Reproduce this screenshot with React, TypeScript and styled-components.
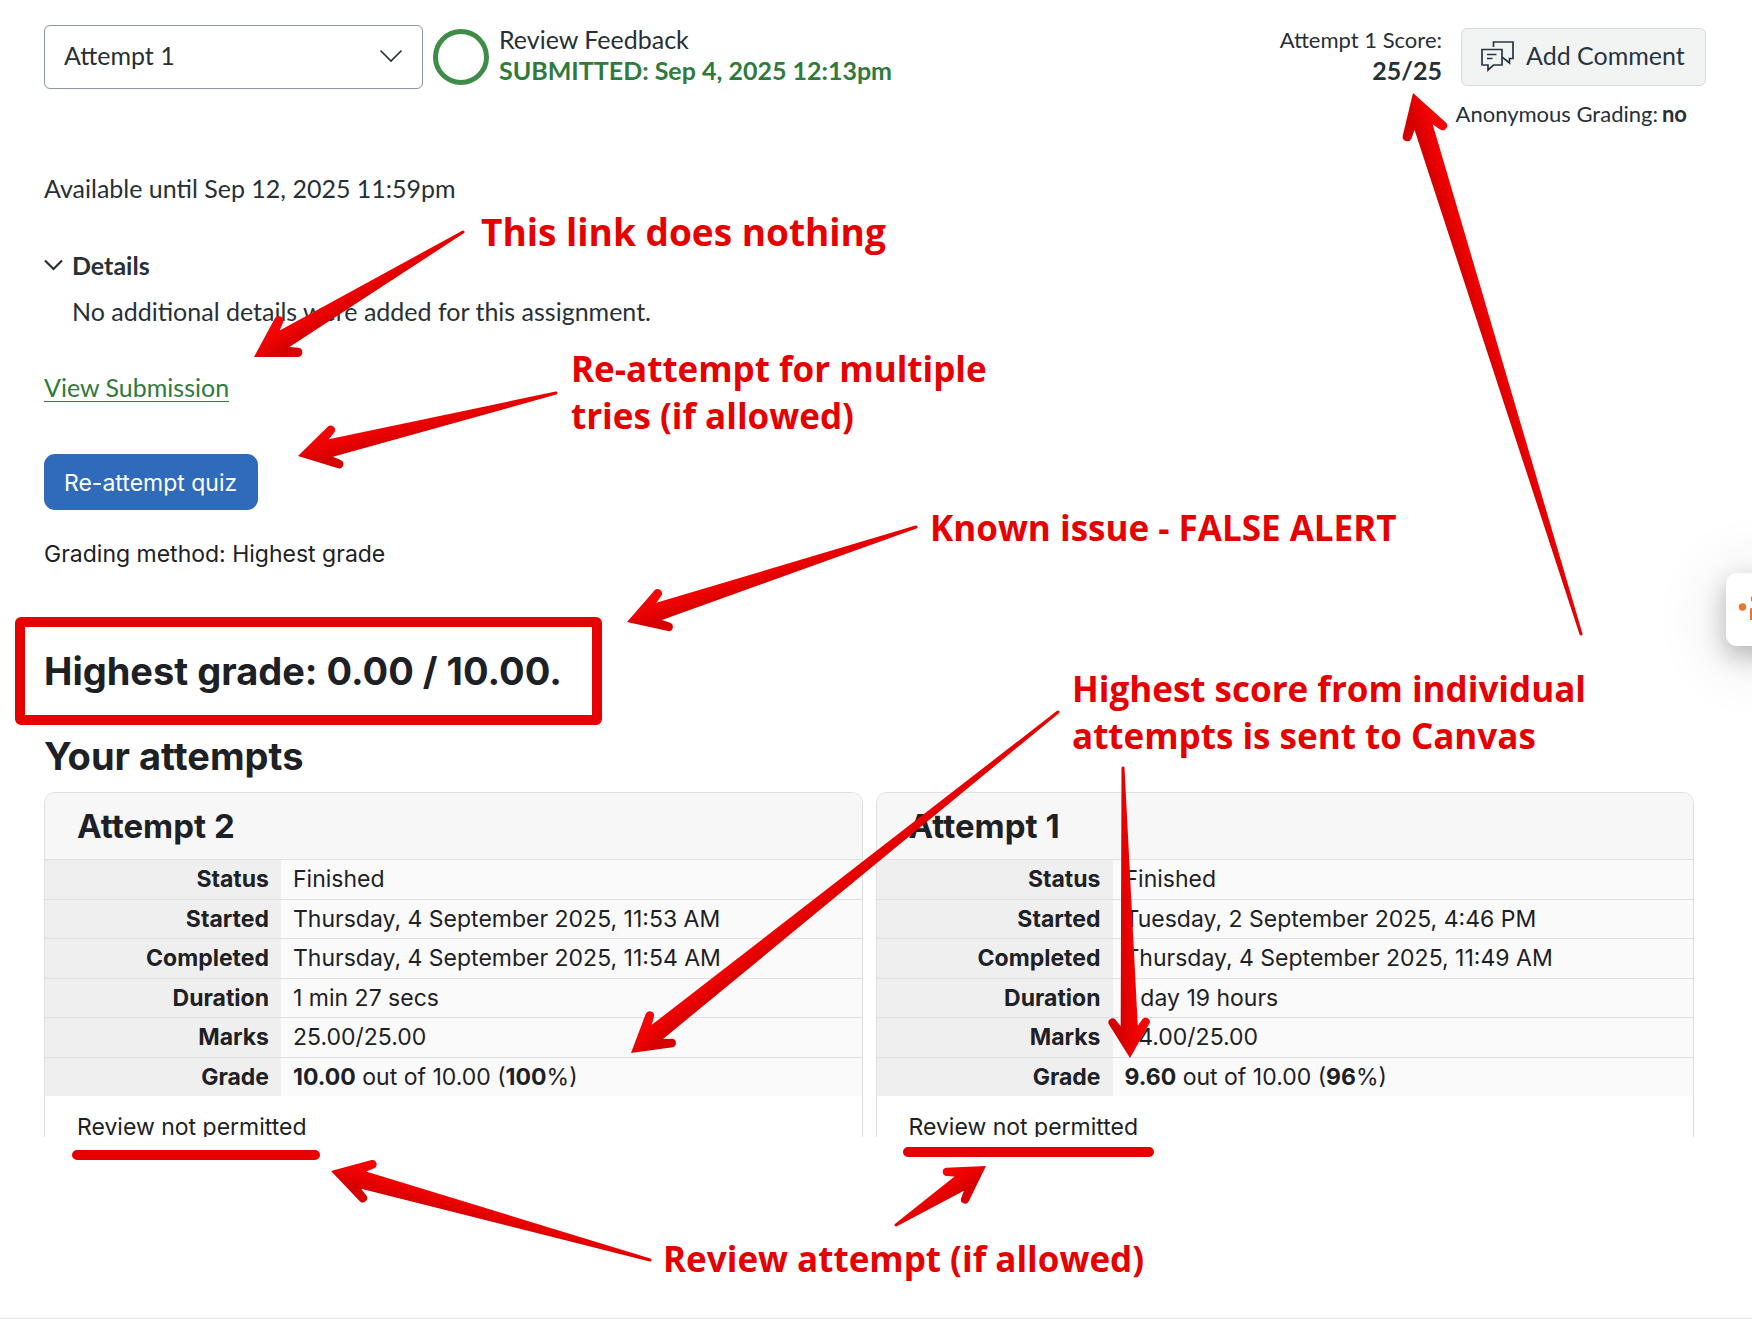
import React, { useId } from "react";
import styled, { createGlobalStyle } from "styled-components";

const lato = `Lato, "Open Sans", sans-serif`;
const inter = `Inter, "Liberation Sans", sans-serif`;

const GlobalStyle = createGlobalStyle`
  *, *::before, *::after { box-sizing: border-box; }
  body { margin: 0; background: #fff; color: #273035; font-family: ${lato}; font-size: 25px; }
  h2, h3, p { margin: 0; }
`;

const Page = styled.div`
  position: relative;
  min-height: 100vh;
  overflow: hidden;
  padding: 24px 46px 13px 44px;
  display: flex;
  flex-direction: column;
`;

const Header = styled.header`
  display: flex;
  justify-content: space-between;
  align-items: flex-start;
  height: 112px;
`;

const HeaderGroup = styled.div`
  display: flex;
  align-items: flex-start;
  gap: 10px;
`;

const SelectBox = styled.div`
  position: relative;
  width: 379px;
  margin-top: 1px;
`;

const AttemptSelect = styled.select`
  width: 100%;
  height: 64px;
  padding: 0 56px 4px 19px;
  border: 1px solid #8d959f;
  border-radius: 6px;
  background: #fff;
  color: #273035;
  font: 25px ${lato};
  appearance: none;
`;

const SelectChevron = styled.svg`
  position: absolute;
  right: 20px;
  top: 24px;
  pointer-events: none;
`;

const StatusRing = styled.span`
  width: 56px;
  height: 56px;
  margin-top: 5px;
  border: 5px solid #3f8c49;
  border-radius: 50%;
`;

const StatusText = styled.div`
  line-height: 31px;
`;

const Submitted = styled.div`
  color: #2f7a3c;
  font-weight: 700;
`;

const HeaderRight = styled.div`
  display: grid;
  grid-template-columns: auto 245px;
  column-gap: 19px;
`;

const Score = styled.div`
  font-size: 22px;
  line-height: 31px;
  text-align: right;
`;

const ScoreValue = styled.strong`
  display: block;
  font-size: 25px;
`;

const CommentButton = styled.button`
  display: flex;
  align-items: center;
  gap: 12px;
  height: 58px;
  margin-top: 4px;
  padding: 0 19px 2px;
  border: 1px solid #d7dade;
  border-radius: 6px;
  background: #f2f4f4;
  color: #273540;
  font: 25px ${lato};
  white-space: nowrap;
`;

const CommentLabel = styled.span`
  padding-bottom: 2px;
`;

const Anonymous = styled.p`
  grid-column: 1 / -1;
  display: flex;
  justify-content: flex-end;
  gap: 4px;
  margin-top: 14px;
  padding-right: 19px;
  font-size: 22px;
  line-height: 28px;
`;

const Availability = styled.p`
  margin-top: 37px;
  line-height: 30px;
`;

const Details = styled.details`
  margin-top: 47px;
  line-height: 30px;
`;

const Summary = styled.summary`
  display: flex;
  align-items: center;
  gap: 9px;
  list-style: none;
  font-weight: 700;
`;

const DetailsBody = styled.p`
  margin-top: 16px;
  padding-left: 28px;
`;

const SubmissionLink = styled.a`
  align-self: flex-start;
  margin-top: 46px;
  height: 30px;
  border-bottom: 1px solid #2f7a3c;
  color: #2f7a3c;
  line-height: 30px;
  text-decoration: none;
`;

const Quiz = styled.section`
  display: flex;
  flex-direction: column;
  align-items: flex-start;
  margin-top: 52px;
  padding-right: 12px;
  color: #1d2125;
  font-family: ${inter};
  font-size: 23px;
`;

const ReattemptButton = styled.button`
  height: 56px;
  padding: 2px 21px 0 20px;
  border: 0;
  border-radius: 11px;
  background: #306bbb;
  color: #fff;
  font: 23px ${inter};
`;

const GradingMethod = styled.p`
  margin-top: 30px;
  line-height: 28px;
`;

const Heading = styled.h2<{ $gap: number }>`
  margin-top: ${(p) => p.$gap}px;
  font-size: 38px;
  font-weight: 700;
  line-height: 46px;
`;

const Attempts = styled.div`
  display: grid;
  grid-template-columns: 1fr 1fr;
  gap: 13px;
  width: 100%;
  height: 345px;
  margin-top: 13px;
  overflow: hidden;
`;

const Card = styled.article`
  height: 380px;
  border: 1px solid #dfdfdf;
  border-radius: 11px;
  overflow: hidden;
`;

const CardTitle = styled.h3`
  height: 66px;
  padding: 0 32px;
  background: #f7f7f7;
  font-size: 33px;
  font-weight: 700;
  line-height: 66px;
`;

const SummaryTable = styled.table`
  width: 100%;
  height: 237px;
  border-collapse: collapse;
  line-height: 28px;

  th, td {
    padding: 0 12px;
    border-top: 1px solid #dee0e5;
  }
  th {
    width: 236px;
    background: #efefef;
    font-weight: 700;
    text-align: right;
  }
  td { background: #fafafa; }
`;

const ReviewNote = styled.p`
  padding: 17px 32px;
  line-height: 28px;
`;

const PageEnd = styled.hr`
  width: calc(100% + 90px);
  height: 1px;
  margin: auto -46px 0 -44px;
  border: 0;
  background: #e8e8e8;
`;

const SideWidget = styled.button`
  position: absolute;
  top: 573px;
  right: -40px;
  width: 66px;
  height: 73px;
  padding: 0;
  border: 0;
  border-radius: 11px;
  background: #fff;
  box-shadow: 0 10px 24px rgba(0, 0, 0, 0.24), 0 8px 70px rgba(0, 0, 0, 0.16);
`;

const Overlay = styled.div`
  position: absolute;
  top: 0;
  left: 0;
  pointer-events: none;
`;

const ArrowLayer = styled.svg`
  display: block;
`;

const Note = styled.p<{ $x: number; $y: number; $large?: boolean }>`
  position: absolute;
  left: ${(p) => p.$x}px;
  top: ${(p) => p.$y}px;
  color: #e60000;
  font-family: "Open Sans", "Noto Sans", sans-serif;
  font-size: ${(p) => (p.$large ? 37 : 35)}px;
  font-weight: 700;
  line-height: 47px;
  white-space: nowrap;
`;

type ArrowProps = { tip: [number, number]; tail: [number, number]; head?: number; flip?: boolean };

function Arrow({ tip, tail, head = 0.95, flip = false }: ArrowProps) {
  const id = useId();
  const dx = tail[0] - tip[0];
  const dy = tail[1] - tip[1];
  const length = Math.hypot(dx, dy);
  const angle = (Math.atan2(dy, dx) * 180) / Math.PI;
  const p = (x: number, y: number) => `${x * head} ${y * head}`;
  const d = [
    `M0 0L${p(38, 22.6)}`,
    `A${p(4.6, 4.6)} 0 0 0 ${p(43, 15)}`,
    `L${p(35.6, 9.5)}`,
    `L${length} 1.5A1.5 1.5 0 0 0 ${length} -1.5`,
    `L${p(35.6, -9.5)}`,
    `L${p(43, -15)}`,
    `A${p(4.6, 4.6)} 0 0 0 ${p(38, -22.6)}Z`,
  ].join("");
  const edge = flip ? -14 : 14;
  return (
    <g transform={`translate(${tip[0]} ${tip[1]}) rotate(${angle})`}>
      <linearGradient id={id} gradientUnits="userSpaceOnUse" x1="0" y1={-edge} x2="0" y2={edge}>
        <stop offset="0" stopColor="#f40404" />
        <stop offset="0.3" stopColor="#f00202" />
        <stop offset="0.8" stopColor="#d60000" />
        <stop offset="1" stopColor="#d60000" />
      </linearGradient>
      <path d={d} fill={`url(#${id})`} />
    </g>
  );
}

const attempts = [
  {
    name: "Attempt 2",
    rows: [
      ["Status", "Finished"],
      ["Started", "Thursday, 4 September 2025, 11:53 AM"],
      ["Completed", "Thursday, 4 September 2025, 11:54 AM"],
      ["Duration", "1 min 27 secs"],
      ["Marks", "25.00/25.00"],
    ],
    grade: "10.00",
    percent: "100",
  },
  {
    name: "Attempt 1",
    rows: [
      ["Status", "Finished"],
      ["Started", "Tuesday, 2 September 2025, 4:46 PM"],
      ["Completed", "Thursday, 4 September 2025, 11:49 AM"],
      ["Duration", "1 day 19 hours"],
      ["Marks", "24.00/25.00"],
    ],
    grade: "9.60",
    percent: "96",
  },
];

export default function App() {
  return (
    <Page>
      <GlobalStyle />
      <Header>
        <HeaderGroup>
          <SelectBox>
            <AttemptSelect aria-label="Attempt" defaultValue="1">
              <option value="1">Attempt 1</option>
              <option value="2">Attempt 2</option>
            </AttemptSelect>
            <SelectChevron width="24" height="14" viewBox="0 0 24 14" fill="none" stroke="#273035" strokeWidth="1.6">
              <path d="M1.5 1.5L12 12L22.5 1.5" />
            </SelectChevron>
          </SelectBox>
          <StatusRing />
          <StatusText>
            <div>Review Feedback</div>
            <Submitted>SUBMITTED: Sep 4, 2025 12:13pm</Submitted>
          </StatusText>
        </HeaderGroup>
        <HeaderRight>
          <Score>
            Attempt 1 Score:
            <ScoreValue>25/25</ScoreValue>
          </Score>
          <CommentButton type="button">
            <svg width="33" height="31" viewBox="0 0 33 31" fill="none" stroke="#273540" strokeWidth="1.7">
              <path d="M12.5 6V1H32V17.5H28.5V22L21 16" />
              <path d="M1 8.5H21V24H12.5L7 29V24H1Z" />
              <path d="M6 13.5H15.5M6 17.5H11.5" />
            </svg>
            <CommentLabel>Add Comment</CommentLabel>
          </CommentButton>
          <Anonymous>
            <span>Anonymous Grading:</span>
            <strong>no</strong>
          </Anonymous>
        </HeaderRight>
      </Header>

      <Availability>Available until Sep 12, 2025 11:59pm</Availability>

      <Details open>
        <Summary>
          <svg width="19" height="12" viewBox="0 0 19 12" fill="none" stroke="#273035" strokeWidth="2.2">
            <path d="M1 1.5L9.5 10L18 1.5" />
          </svg>
          Details
        </Summary>
        <DetailsBody>No additional details were added for this assignment.</DetailsBody>
      </Details>

      <SubmissionLink href="#submission">View Submission</SubmissionLink>

      <Quiz>
        <ReattemptButton type="button">Re-attempt quiz</ReattemptButton>
        <GradingMethod>Grading method: Highest grade</GradingMethod>
        <Heading $gap={80}>Highest grade: 0.00 / 10.00.</Heading>
        <Heading $gap={39}>Your attempts</Heading>
        <Attempts>
          {attempts.map((a) => (
            <Card key={a.name}>
              <CardTitle>{a.name}</CardTitle>
              <SummaryTable>
                <tbody>
                  {a.rows.map(([label, value]) => (
                    <tr key={label}>
                      <th scope="row">{label}</th>
                      <td>{value}</td>
                    </tr>
                  ))}
                  <tr>
                    <th scope="row">Grade</th>
                    <td>
                      <b>{a.grade}</b> out of 10.00 (<b>{a.percent}</b>%)
                    </td>
                  </tr>
                </tbody>
              </SummaryTable>
              <ReviewNote>Review not permitted</ReviewNote>
            </Card>
          ))}
        </Attempts>
      </Quiz>

      <PageEnd />

      <SideWidget type="button" aria-label="Open side panel">
        <svg width="66" height="73" viewBox="0 0 66 73" fill="#ea7530">
          <circle cx="16.5" cy="34" r="3.7" />
          <circle cx="28.5" cy="26" r="3.7" />
          <path d="M24 35.5L32 33V47H24Z" />
        </svg>
      </SideWidget>

      <Overlay>
        <ArrowLayer width="1752" height="1332" viewBox="0 0 1752 1332">
          <rect x="20" y="622" width="577" height="98" rx="1" fill="none" stroke="#e60000" strokeWidth="10" strokeLinejoin="round" />
          <path d="M77 1155H315M908 1152H1149" stroke="#e60000" strokeWidth="10" strokeLinecap="round" />
          <Arrow tip={[254, 357]} tail={[463, 232]} head={1} />
          <Arrow tip={[298, 456]} tail={[556, 393]} />
          <Arrow tip={[627, 622]} tail={[916, 527]} />
          <Arrow tip={[1413, 93]} tail={[1581, 634]} head={1} />
          <Arrow tip={[631, 1053]} tail={[1058, 712]} />
          <Arrow tip={[1130, 1058]} tail={[1123, 768]} head={0.9} flip />
          <Arrow tip={[331, 1171]} tail={[650, 1260]} />
          <Arrow tip={[986, 1166]} tail={[896, 1225]} head={0.9} flip />
        </ArrowLayer>
        <Note $x={481} $y={208} $large>This link does nothing</Note>
        <Note $x={571} $y={345}>
          Re-attempt for multiple
          <br />
          tries (if allowed)
        </Note>
        <Note $x={930} $y={504}>Known issue - FALSE ALERT</Note>
        <Note $x={1072} $y={665}>
          Highest score from individual
          <br />
          attempts is sent to Canvas
        </Note>
        <Note $x={663} $y={1235}>Review attempt (if allowed)</Note>
      </Overlay>
    </Page>
  );
}
